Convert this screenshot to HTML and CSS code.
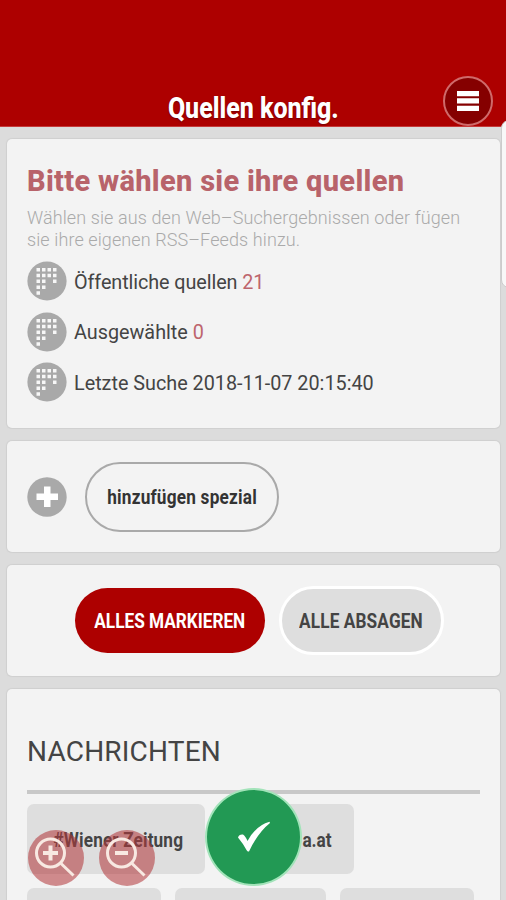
FILE: index.html
```html
<!DOCTYPE html>
<html lang="de">
<head>
<meta charset="utf-8">
<meta name="viewport" content="width=device-width, initial-scale=1">
<title>Quellen konfig.</title>
<link rel="stylesheet" href="styles.css">
</head>
<body>
<svg class="defs" aria-hidden="true">
  <symbol id="dots" viewBox="0 0 40 40">
    <circle cx="20" cy="20" r="19.6" fill="#a9a9a9"/>
    <path fill="#f7f7f7" d="M9.500 7h3.500v3.500h-3.500zM15 7h3.500v3.500h-3.500zM20.500 7h3.500v3.500h-3.500zM26 7h3.500v3.500h-3.500zM9.500 12.700h3.500v3.500h-3.500zM15 12.700h3.500v3.500h-3.500zM20.500 12.700h3.500v3.500h-3.500zM26 12.700h3.500v3.500h-3.500zM9.500 18.400h3.500v3.500h-3.500zM15 18.400h3.500v3.500h-3.500zM26 18.400h3.500v3.500h-3.500zM9.500 24.600h3.500v3.500h-3.500zM15 24.600h3.500v3.500h-3.500zM9.500 30.300h3.500v3.500h-3.500z"/>
  </symbol>
</svg>
<div class="screen">
  <header class="bar">
    <h1 class="bar-title"><span class="cond">Quellen konfig.</span></h1>
    <button class="menu" aria-label="Menu"><svg width="22" height="20"><path d="M0 0h22v5.300H0zM0 7.300h22v5.300H0zM0 14.700h22v5.300H0z" fill="#fff"/></svg></button>
  </header>
  <main class="cards">
    <section class="card intro">
      <h2>Bitte wählen sie ihre quellen</h2>
      <p class="hint">Wählen sie aus den Web–Suchergebnissen oder fügen<br>sie ihre eigenen RSS–Feeds hinzu.</p>
      <ul class="stats">
        <li><svg class="dot"><use href="#dots"/></svg><span class="tight">Öffentliche quellen <b>21</b></span></li>
        <li><svg class="dot"><use href="#dots"/></svg><span>Ausgewählte <b>0</b></span></li>
        <li><svg class="dot"><use href="#dots"/></svg><span>Letzte Suche 2018-11-07 20:15:40</span></li>
      </ul>
    </section>
    <section class="card add">
      <svg class="plus" viewBox="0 0 40 40"><circle cx="20" cy="20" r="19.7" fill="#a9a9a9"/><path d="M17 9.500h6.500v7h7.500v6.500h-7.500v7h-6.500v-7h-7.500v-6.500h7.500z" fill="#fff"/></svg>
      <button class="pill outline"><span class="cond">hinzufügen spezial</span></button>
    </section>
    <section class="card actions">
      <button class="pill primary"><span class="cond">ALLES MARKIEREN</span></button>
      <button class="pill muted"><span class="cond">ALLE ABSAGEN</span></button>
    </section>
    <section class="card news">
      <h3>NACHRICHTEN</h3>
      <div class="tags">
        <span class="tag zeitung"><span class="cond">#Wiener Zeitung</span></span>
        <span class="tag at"><span class="cond">a.at</span></span>
      </div>
      <div class="tags">
        <span class="tag w1"></span><span class="tag w2"></span><span class="tag w3"></span>
      </div>
    </section>
  </main>
  <div class="thumb"></div>
  <div class="zooms">
    <svg viewBox="0 0 56 56"><circle cx="28" cy="28" r="28" fill="#b2383b" fill-opacity=".56"/><g fill="none" stroke="#f8e9e2" stroke-width="3"><circle cx="22.500" cy="23" r="14"/><path d="M33 33.500L45.500 45.500"/><path d="M15 23h15M22.500 15.500v15" stroke-width="4"/></g></svg>
    <svg viewBox="0 0 56 56"><circle cx="28" cy="28" r="28" fill="#b2383b" fill-opacity=".56"/><g fill="none" stroke="#f8e9e2" stroke-width="3"><circle cx="22.500" cy="23" r="14"/><path d="M33 33.500L45.500 45.500"/><path d="M16 23h13" stroke-width="4"/></g></svg>
  </div>
  <button class="confirm" aria-label="OK"><svg width="34" height="32" viewBox="0 0 34 32"><path d="M1 16.500Q2 13 6 13.500Q8.500 15 10.500 20Q19 4.500 32.500.8L33 2Q21 11.500 12 30.500Q10.500 31 9.500 29Q6 22.500 1 16.500z" fill="#fff"/></svg></button>
</div>
</body>
</html>
```

FILE: styles.css
```css
* { box-sizing: border-box; }
body { margin: 0; background: #dcdcdc; font-family: Roboto, "Liberation Sans", sans-serif; color: #444; }
h1, h2, h3, p, ul { margin: 0; padding: 0; }
button { font-family: inherit; padding: 0; border: 0; }
.defs { position: absolute; width: 0; height: 0; }
.screen { position: relative; height: 900px; overflow: hidden; }
.cond { display: inline-block; white-space: nowrap; transform: scaleX(.86); }

.bar { position: relative; height: 127px; background: #ad0000; border-bottom: 1px solid #c63b3b; display: flex; align-items: flex-end; justify-content: center; }
.bar-title { font-size: 29px; line-height: 34px; font-weight: 800; color: #fff; margin-bottom: 1px; text-shadow: 0 1px 2px rgba(60, 0, 0, .5); }
.menu { position: absolute; left: 443px; top: 76px; width: 50px; height: 50px; border: 2px solid #cf6a6a; border-radius: 50%; background: #850000; display: flex; align-items: center; justify-content: center; }

.cards { display: flex; flex-direction: column; gap: 13px; padding: 12px 6px 0 7px; }
.card { flex: none; background: #f3f3f3; border-radius: 5px; box-shadow: 0 0 1px 1px #cfcfcf; padding: 0 20px; }
.intro { height: 289px; padding-top: 24px; }
.intro h2 { font-size: 29px; line-height: 36px; font-weight: 800; letter-spacing: .3px; color: #b8636a; white-space: nowrap; }
.hint { font-size: 18px; line-height: 22px; font-weight: 300; letter-spacing: .1px; color: #aaa; margin-top: 8px; white-space: nowrap; }
.stats { list-style: none; margin-top: 10px; }
.stats li { display: flex; align-items: center; gap: 7px; height: 40px; margin-bottom: 10.5px; font-size: 19.8px; white-space: nowrap; }
.stats span { padding-top: 2px; }
.stats b { font-weight: 400; color: #bd656d; }
.tight { letter-spacing: -.08px; }
.dot, .plus { width: 40px; height: 40px; flex: none; }

.pill { border-radius: 36px; font-size: 20px; font-weight: 700; display: flex; align-items: center; justify-content: center; }
.add { height: 111px; display: flex; align-items: center; gap: 18px; }
.outline { width: 194px; height: 70px; border: 2px solid #a9a9a9; background: none; color: #333; letter-spacing: .25px; }
.actions { height: 111px; display: flex; align-items: center; justify-content: center; gap: 14px; padding: 0 0 0 11px; }
.primary { width: 190px; height: 65px; background: #ad0000; color: #fff; padding-top: 1px; }
.muted { width: 165px; height: 69px; border: 3px solid #fff; background: #dedede; color: #444; padding-top: 1px; letter-spacing: .15px; }

.news { height: 230px; padding-top: 43px; }
.news h3 { font-size: 28px; line-height: 40px; font-weight: 400; letter-spacing: .2px; height: 62px; border-bottom: 4px solid #c8c8c8; margin-bottom: 10px; }
.tags { display: flex; gap: 14px; margin-bottom: 14px; }
.tag { height: 70px; border-radius: 7px; background: #dedede; font-size: 20px; font-weight: 700; display: flex; align-items: center; padding-top: 2px; }
.zeitung { width: 178px; justify-content: center; padding-left: 4px; letter-spacing: .15px; }
.at { width: 135px; justify-content: flex-end; padding-right: 20px; }
.w1 { width: 134px; }
.w2 { width: 151px; }
.w3 { width: 134px; }

.thumb { position: absolute; left: 501px; top: 120px; width: 16px; height: 168px; background: #f8f8f8; border: 1px solid #ccc; border-radius: 8px; }
.zooms { position: absolute; left: 28px; top: 830px; display: flex; gap: 15px; }
.zooms svg { width: 56px; height: 56px; }
.confirm { position: absolute; left: 205px; top: 788px; width: 97px; height: 98px; border: 2px solid #a2e3b9; border-radius: 50%; background: #229954; display: flex; align-items: center; justify-content: center; }
```
